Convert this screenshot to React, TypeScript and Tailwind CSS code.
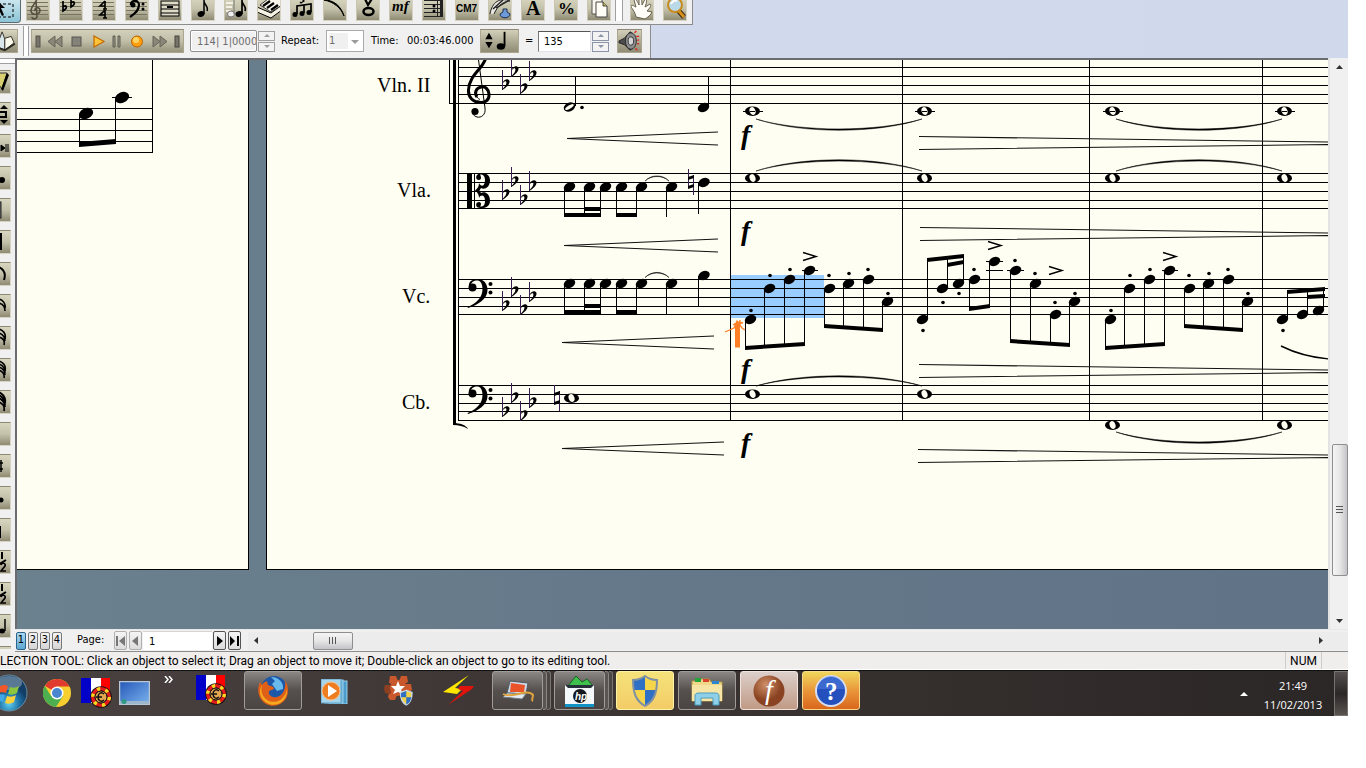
import React from "react";

type Kids = { children?: React.ReactNode };

/* ---------- notation primitives ---------- */

const Lines = ({ ys, x, w }: { ys: number[]; x: number; w: number }) => (
  <g shapeRendering="crispEdges">
    {ys.map((y) => (
      <rect key={y} x={x} y={y} width={w} height={1} />
    ))}
  </g>
);

const Head = ({ x, y, r = 7 }: { x: number; y: number; r?: number }) => (
  <ellipse cx={x} cy={y} rx={r} ry={r * 0.72} transform={`rotate(-24 ${x} ${y})`} />
);

const Stem = ({ x, a, b }: { x: number; a: number; b: number }) => (
  <rect x={x} y={Math.min(a, b)} width={1} height={Math.abs(b - a)} shapeRendering="crispEdges" />
);

const Beam = ({ x1, y1, x2, y2, t = 4 }: { x1: number; y1: number; x2: number; y2: number; t?: number }) => (
  <polygon points={`${x1},${y1} ${x2},${y2} ${x2},${y2 + t} ${x1},${y1 + t}`} />
);

const Whole = ({ x, y, ledger }: { x: number; y: number; ledger?: boolean }) => (
  <g>
    {ledger && <rect x={x - 9} y={y} width={20} height={1} shapeRendering="crispEdges" />}
    <ellipse cx={x + 0.5} cy={y + 0.2} rx={7.5} ry={4.8} />
    <ellipse cx={x + 0.5} cy={y + 0.2} rx={2.9} ry={4} fill="#fefef2" transform={`rotate(-20 ${x} ${y})`} />
    {ledger && <rect x={x - 2} y={y} width={5} height={1} shapeRendering="crispEdges" />}
  </g>
);

const Flat = ({ x, y }: { x: number; y: number }) => (
  <g>
    <rect x={x} y={y - 14} width={1} height={20} fill="#3a2050" />
    <path
      d={`M${x} ${y + 6} C${x + 4} ${y + 4} ${x + 8} ${y} ${x + 7.5} ${y - 3} C${x + 6.5} ${y - 5.5} ${x + 3} ${y - 5.5} ${x + 1} ${y - 2} V${y - 1} C${x + 3} ${y - 3.5} ${x + 4.6} ${y - 3} ${x + 4.4} ${y - 1} C${x + 4} ${y + 2} ${x + 2} ${y + 3} ${x + 1} ${y + 4.5} Z`}
    />
  </g>
);

const Natural = ({ x, y }: { x: number; y: number }) => (
  <g>
    <rect x={x} y={y - 13} width={1} height={19} fill="#3a2050" />
    <rect x={x + 5} y={y - 7} width={1} height={20} fill="#3a2050" />
    <polygon points={`${x},${y - 5} ${x + 6},${y - 7} ${x + 6},${y - 4} ${x},${y - 2}`} />
    <polygon points={`${x},${y + 4} ${x + 6},${y + 2} ${x + 6},${y + 5} ${x},${y + 7}`} />
  </g>
);

const Tie = ({ x1, x2, y, h }: { x1: number; x2: number; y: number; h: number }) => (
  <path
    d={`M${x1} ${y} C${x1 + (x2 - x1) * 0.27} ${y + h * 1.36} ${x2 - (x2 - x1) * 0.27} ${y + h * 1.36} ${x2} ${y} C${x2 - (x2 - x1) * 0.27} ${y + h * 1.2} ${x1 + (x2 - x1) * 0.27} ${y + h * 1.2} ${x1} ${y}Z`}
    stroke="#000"
    strokeWidth={0.5}
  />
);

const Cresc = ({ x1, x2, y }: { x1: number; x2: number; y: number }) => (
  <path d={`M${x2} ${y - 6} L${x1} ${y + 0.5} L${x2} ${y + 7}`} fill="none" stroke="#111" strokeWidth={1.1} />
);

const Dim = ({ x, y }: { x: number; y: number }) => (
  <path
    d={`M${x} ${y} L1328 ${y + 5.5} L1740 ${y + 11} M${x} ${y + 13} L1328 ${y + 8}`}
    fill="none"
    stroke="#111"
    strokeWidth={1.1}
  />
);

const Accent = ({ x, y }: { x: number; y: number }) => (
  <path d={`M${x - 6} ${y - 4} L${x + 7} ${y} L${x - 6} ${y + 4}`} fill="none" stroke="#000" strokeWidth={1.4} />
);

const Forte = ({ y }: { y: number }) => (
  <text x={741} y={y} className="font-['Liberation_Serif',serif] text-[28px] font-bold italic">
    f
  </text>
);

const BassClef = ({ y }: { y: number }) => (
  <g transform={`translate(0 ${y})`}>
    <circle cx={472.5} cy={8.5} r={4} />
    <path d="M469 8 C468 2 473 0 478 0 C484 0 487.500 5 487.500 11 C487.500 20 478 26 468 29 L467.500 28 C477 24 482.500 18 482.500 10 C482.500 4 480 1.500 477 1.500 C473 1.500 470.500 4 470.500 8Z" />
    <circle cx={490.5} cy={5} r={2} />
    <circle cx={490.5} cy={13.5} r={2} />
  </g>
);

const AltoClef = () => (
  <g>
    <rect x={467} y={173} width={5} height={36} />
    <rect x={474} y={173} width={1} height={36} />
    <path d="M475 190.500 C478 188 479 186 479 183 C481 187 485 187 485 180 C485 175 482 174 480 174.500 C481 176 482 180 479 180 C476 180 475.500 177 477 175 C480 172 490 172 490 180 C490 188 484 190 481 188 L479.500 190.500 L481 193 C484 191 490 193 490 201 C490 209 480 209 477 207 C475.500 205 476 202 479 202 C482 202 481 206 480 206.500 C482 207 485 206 485 201 C485 195 481 194 479 198 C479 195 478 193 475 190.500Z" />
  </g>
);

const TrebleClef = () => (
  <g fill="none" stroke="#000">
    <path d="M486 56 C486 67 469 74 468.500 90 C468 98 474 102.500 480 102.500" strokeWidth={3} />
    <path d="M477 102 C485 104 489.500 100 489 94 C488.500 89 485 86 481 87 C476 88 474 93 477 97" strokeWidth={3} />
    <path d="M477 97 C478 98.500 479 99 480 99.500" strokeWidth={1} />
    <path d="M478 56 L485 108 C486 115 481 118 477 117 C474 116 472 114 473 111" strokeWidth={1} />
    <circle cx={475} cy={111.5} r={3.6} fill="#000" stroke="none" />
  </g>
);

const dots = (pts: [number, number][]) =>
  pts.map(([x, y]) => <circle key={`${x}-${y}`} cx={x} cy={y} r={1.8} />);

const heads = (pts: [number, number][], r = 7) =>
  pts.map(([x, y]) => <Head key={`${x}-${y}`} x={x} y={y} r={r} />);

const CelloBar = () => (
  <g>
    {heads([[750.5, 319.5], [769.5, 288.5], [789.5, 279.5], [809.5, 270.5], [829.5, 288.5], [848.5, 283.5], [868.5, 279.5], [887.5, 301.5]], 6)}
    {dots([[751, 310.5], [770, 275.5], [790, 269.5], [829, 275.5], [849, 273.5], [868, 269.5], [888, 293.5]])}
    <Stem x={745} a={320} b={347} />
    <Stem x={764} a={289} b={346} />
    <Stem x={784} a={280} b={345} />
    <Stem x={804} a={271} b={343} />
    <Beam x1={745} y1={346} x2={805} y2={342} />
    <Stem x={824} a={289} b={325} />
    <Stem x={843} a={284} b={327} />
    <Stem x={863} a={280} b={328} />
    <Stem x={882} a={302} b={330} />
    <Beam x1={824} y1={324} x2={883} y2={328} />
    <rect x={802} y={270} width={16} height={1} />
    <Accent x={809} y={256.5} />
  </g>
);

const Rhythm = ({ y, stemEnd, inner }: { y: number; stemEnd: number; inner: number }) => (
  <g>
    {heads([[569.5, y], [589.5, y], [605.5, y], [621.5, y], [641.5, y], [671.5, y]], 6)}
    {[564, 584, 600, 616, 636, 666].map((x) => (
      <Stem key={x} x={x} a={y} b={stemEnd} />
    ))}
    <Beam x1={564} y1={stemEnd - 4} x2={601} y2={stemEnd - 4} />
    <Beam x1={616} y1={stemEnd - 4} x2={637} y2={stemEnd - 4} />
    <Beam x1={584} y1={inner} x2={601} y2={inner} />
    <Tie x1={645} x2={669} y={y - 6} h={-5} />
  </g>
);

function Score() {
  return (
    <svg className="block h-full w-full" role="img" aria-label="String section score">
      <g transform="translate(-267 -60)">
        <rect x={731} y={275} width={93} height={43} fill="#99ccff" />
        <g className="font-['Liberation_Serif',serif] text-[20px]">
          <text x={377} y={92}>Vln. II</text>
          <text x={397} y={197}>Vla.</text>
          <text x={402} y={303}>Vc.</text>
          <text x={402} y={409}>Cb.</text>
        </g>
        <Lines x={458} w={2000} ys={[67, 76, 85, 94, 103, 173, 182, 191, 200, 208, 279, 288, 297, 306, 314, 385, 394, 403, 411, 420]} />
        <g shapeRendering="crispEdges">
          <rect x={453} y={60} width={3} height={364} />
          <rect x={458} y={60} width={1} height={361} />
          <rect x={449} y={60} width={1} height={44} />
          <rect x={449} y={103} width={9} height={1} />
          {[730, 902, 1089, 1262].map((x) => (
            <rect key={x} x={x} y={60} width={1} height={361} />
          ))}
        </g>
        <path d="M453 423 C460 423 466 425 468 429 C463 426 459 425 453 425Z" />

        <TrebleClef />
        <AltoClef />
        <BassClef y={279} />
        <BassClef y={385} />
        {[[502, 84], [511, 71], [520, 88], [529, 75], [502, 194], [511, 181], [520, 199], [529, 185], [502, 305], [511, 291], [520, 309], [529, 296], [502, 411], [511, 397], [520, 415], [529, 402]].map(([x, y]) => (
          <Flat key={`${x}-${y}`} x={x} y={y} />
        ))}

        <Head x={569.5} y={107} r={6} />
        <ellipse cx={569.5} cy={107} rx={4.8} ry={1.6} fill="#fefef2" transform="rotate(-30 569.5 107)" />
        <Stem x={575} a={77} b={106} />
        <circle cx={582} cy={107.5} r={1.8} />
        <Head x={703.5} y={107.5} r={6} />
        <Stem x={708} a={77} b={106} />
        {[752, 924, 1112, 1284].map((x) => (
          <g key={x}>
            <Whole x={x} y={111} ledger />
            <Whole x={x} y={178} />
          </g>
        ))}
        <Whole x={752} y={394} />
        <Whole x={924} y={394} />
        <Whole x={1112} y={425} />
        <Whole x={1284} y={425} />
        <Whole x={571} y={398} />
        <Natural x={554} y={398} />
        <Natural x={688} y={182} />

        <Tie x1={756} x2={922} y={119} h={11} />
        <Tie x1={1116} x2={1282} y={119} h={11} />
        <Tie x1={756} x2={922} y={171} h={-11} />
        <Tie x1={1116} x2={1282} y={171} h={-11} />
        <Tie x1={756} x2={922} y={386} h={-10} />
        <Tie x1={1116} x2={1282} y={432} h={11} />
        <path d="M1281 346 Q1303 357 1330 359" fill="none" stroke="#000" strokeWidth={1.4} />

        <Rhythm y={187} stemEnd={217} inner={207} />
        <Head x={704} y={182.5} r={6} />
        <Stem x={698} a={183} b={214} />
        <Rhythm y={283.5} stemEnd={314} inner={304} />
        <Head x={704} y={275.5} r={6} />
        <Stem x={698} a={276} b={306} />

        <CelloBar />
        <g transform="translate(360 0)">
          <CelloBar />
        </g>

        {heads([[922.5, 319.5], [942.5, 288.5], [958.5, 283.5], [974.5, 279.5], [994.5, 261.5], [1015.5, 270.5], [1035.5, 283.5], [1055.5, 314.5], [1074.5, 301.5], [1282.5, 319.5], [1302.5, 314.5], [1318.5, 310.5]], 6)}
        {dots([[923, 330.5], [943, 302.5], [959, 293.5], [974, 269.5], [1015, 260.5], [1035, 273.5], [1055, 302.5], [1075, 293.5], [1283, 330.5]])}
        <Stem x={927} a={259} b={319} />
        <Stem x={947} a={257} b={288} />
        <Stem x={963} a={255} b={283} />
        <Beam x1={927} y1={258} x2={964} y2={254} />
        <Beam x1={947} y1={263} x2={964} y2={260} />
        <Stem x={969} a={280} b={309} />
        <Stem x={989} a={262} b={307} />
        <Beam x1={969} y1={307} x2={990} y2={304} />
        <Stem x={1010} a={271} b={341} />
        <Stem x={1030} a={284} b={343} />
        <Stem x={1050} a={315} b={344} />
        <Stem x={1069} a={302} b={346} />
        <Beam x1={1010} y1={339} x2={1070} y2={343} />
        <rect x={986} y={261} width={17} height={1} />
        <rect x={986} y={270} width={17} height={1} />
        <rect x={1007} y={270} width={17} height={1} />
        <Accent x={994} y={245.5} />
        <Accent x={1055} y={270.5} />
        <Stem x={1287} a={290} b={319} />
        <Stem x={1307} a={289} b={314} />
        <Stem x={1323} a={288} b={310} />
        <Beam x1={1287} y1={290} x2={1325} y2={287} />
        <Beam x1={1307} y1={295} x2={1325} y2={294} />

        <Cresc x1={567} x2={718} y={138} />
        <Cresc x1={564} x2={718} y={245} />
        <Cresc x1={562} x2={714} y={342} />
        <Cresc x1={562} x2={724} y={448} />
        <Dim x={919} y={136.5} />
        <Dim x={920} y={227.5} />
        <Dim x={919} y={364.5} />
        <Dim x={918} y={449.5} />
        {[144, 240, 378, 452].map((y) => (
          <Forte key={y} y={y} />
        ))}
        <g stroke="#ff7f27" fill="none">
          <path d="M737.500 347.500 V323" strokeWidth={5} />
          <path d="M725 332 L734 328 L737 321 L742 328 L745 330 M733 325 L738 322 L743 323 M740 326 V320" strokeWidth={1.3} />
        </g>
      </g>
    </svg>
  );
}

function FacingPage() {
  return (
    <svg className="block h-full w-full" role="img" aria-label="End of the facing page">
      <g transform="translate(-17 -60)">
        <Lines x={17} w={136} ys={[108, 119, 130, 141, 152]} />
        <rect x={152} y={60} width={1} height={93} />
        {heads([[86, 113.5], [122, 97.5]], 7.4)}
        <rect x={112} y={97} width={20} height={1} />
        <Stem x={79} a={114} b={145} />
        <Stem x={115} a={98} b={142} />
        <Beam x1={79} y1={142} x2={116} y2={139} t={5} />
      </g>
    </svg>
  );
}

/* ---------- tool icons, drawn on a 24 × 24 grid ---------- */

const StaffBg = ({ w = 21 }: { w?: number }) => (
  <g fill="#77735f">
    {[5, 9, 13, 17].map((y) => (
      <rect key={y} x={1} y={y} width={w} height={1} />
    ))}
  </g>
);

const glyph = "font-['Liberation_Serif',serif] font-bold";

const topTools: { name: string; art: React.ReactNode }[] = [
  { name: "Staff tool", art: <><StaffBg /><path d="M11 0 C12 5 5 8 5 14 C6 19 14 18 14 13 C13 9 8 11 9 14 M10 4 L11 20 C10 23 6 22 6 20" fill="none" stroke="#555040" strokeWidth="1.6" /></> },
  { name: "Key signature tool", art: <><StaffBg /><path d="M4 4 V14 C9 11 8 7 4 10 M12 0 V10 C17 7 16 3 12 6" fill="none" stroke="#000" strokeWidth="1.7" /></> },
  { name: "Time signature tool", art: <><StaffBg /><path d="M13 4V12M13 9H8L13 4M13 13V21M13 18H8L13 13M11 12H15M11 21H15" fill="none" stroke="#000" strokeWidth="1.7" /></> },
  { name: "Clef tool", art: <><StaffBg /><circle cx="8" cy="8" r="2.500" /><path d="M6 8 C5 3 14 2 14 8 C14 14 9 17 5 20" fill="none" stroke="#000" strokeWidth="2.200" /><circle cx="18" cy="7" r="1.500" /><circle cx="18" cy="12" r="1.500" /></> },
  { name: "Measure tool", art: <><rect x="3" y="4" width="18" height="15" fill="#dedac5" stroke="#000" /><path d="M3 8H21 M3 12H21 M3 16H21" stroke="#000" /><rect x="9" y="9" width="6" height="2" /></> },
  { name: "Simple entry tool", art: <><ellipse cx="10" cy="17" rx="3.500" ry="2.800" transform="rotate(-20 10 17)" /><path d="M13 17 V0 M13 4 C13 8 18 9 16 14" fill="none" stroke="#000" strokeWidth="1.500" /></> },
  { name: "Speedy entry tool", art: <><path d="M2 6H9 M2 10H8 M2 14H7" stroke="#f4f2e6" strokeWidth="2" /><ellipse cx="7" cy="17" rx="3.500" ry="3" fill="#eee" stroke="#777" /><path d="M10 17V1" stroke="#777" /><ellipse cx="15" cy="17" rx="3.500" ry="2.800" transform="rotate(-20 15 17)" /><path d="M18 17 V0 M18 4 C18 8 23 9 21 14" fill="none" stroke="#000" strokeWidth="1.700" /></> },
  { name: "HyperScribe tool", art: <><path d="M0 10 L14 16 L25 8 V13 L14 21 L0 15Z" fill="#f5f2e4" stroke="#000" /><path d="M3 8 L15 -1 L25 3 V8 L14 15Z" fill="#faf8ee" stroke="#333" /><path d="M6 9L13 4 M10 11L17 6 M14 13L21 8" stroke="#000" strokeWidth="2.200" /></> },
  { name: "Tuplet tool", art: <><path d="M10 0H13L12 2L14 4L11 6L10 5" fill="none" stroke="#000" strokeWidth="1.300" /><path d="M7 17V9L21 7V15 M14 16V8" fill="none" stroke="#000" strokeWidth="1.700" /><circle cx="5" cy="17.500" r="2.500" /><circle cx="12" cy="16.500" r="2.500" /><circle cx="19" cy="15.500" r="2.500" /></> },
  { name: "Smart shape tool", art: <path d="M1 3 C11 3 18 9 21 19 C18 11 11 5 1 3Z" stroke="#000" /> },
  { name: "Articulation tool", art: <><path d="M8 0 L12 8 L17 0" fill="none" stroke="#000" strokeWidth="2.200" /><ellipse cx="12.500" cy="14.500" rx="5" ry="3.500" fill="none" stroke="#000" strokeWidth="2.500" /></> },
  { name: "Expression tool", art: <text x="3" y="14" className={`${glyph} text-[15px] italic`}>mf</text> },
  { name: "Repeat tool", art: <><g fill="#222">{[3, 7, 11, 15, 19].map((y) => <rect key={y} x="2" y={y} width="19" height="1" />)}<rect x="18" y="0" width="3" height="20" /><rect x="15" y="0" width="1" height="20" /></g><circle cx="12" cy="9" r="1.500" /><circle cx="12" cy="14" r="1.500" /></> },
  { name: "Chord tool", art: <text x="1" y="15" className="font-['Liberation_Sans',sans-serif] text-[10px] font-bold">CM7</text> },
  { name: "Lyrics tool", art: <><path d="M2 17 C4 5 12 0 22 4 C16 4 10 8 6 17" fill="#e6e4dc" stroke="#222" /><path d="M5 12 L15 3 M8 11 L20 4" stroke="#222" strokeWidth="1.400" /><path d="M15 12H19V15L22 17C22 22 12 22 12 17L15 15Z" fill="#6d9ad8" stroke="#1d2e4f" /></> },
  { name: "Text tool", art: <text x="5" y="18" className={`${glyph} text-[20px]`}>A</text> },
  { name: "Resize tool", art: <text x="4" y="17" className={`${glyph} text-[17px]`}>%</text> },
  { name: "Page layout tool", art: <><path d="M5 1H15V17H5Z" fill="#faf8ee" stroke="#555" /><path d="M9 5H16L20 9V20H9Z" fill="#fffef6" stroke="#444" /><path d="M16 5V9H20" fill="#c9b94e" stroke="#444" /></> },
];

const handArt = (
  <path d="M6 20 C5 14 1 11 1 9 C2 7 5 10 6 10 L4 3 C5 1 7 3 9 8 L9 1 C11 0 12 2 12 8 L15 2 C17 2 17 5 15 10 L20 7 C22 8 20 11 17 14 L22 15 C21 18 18 20 15 22Z" fill="#fffef8" stroke="#665f4a" />
);
const zoomArt = (
  <>
    <path d="M15 13 L21 20" stroke="#3a2a10" strokeWidth="5" />
    <path d="M15 13 L21 20" stroke="#d8901c" strokeWidth="3" />
    <circle cx="12" cy="8" r="7" fill="#b9d8e8" stroke="#c98a1c" strokeWidth="2" />
    <path d="M8 7 C9 4 12 3 14 4" stroke="#fff" strokeWidth="2" fill="none" />
  </>
);

const tile =
  "block h-6 w-6 shrink-0 overflow-hidden border border-[#d6d3c2] border-t-[#8d8974] border-l-[#c9c5ae] bg-linear-to-b from-[#d8d5c0] via-[#c4c1aa] to-[#8f8b74]";

const Tile = ({ name, children }: Kids & { name: string }) => (
  <button type="button" aria-label={name} className={tile}>
    <svg viewBox="1 1 22 22" className="block h-full w-full overflow-hidden">
      {children}
    </svg>
  </button>
);

const SpinPair = ({ label, color }: { label: string; color: string }) => (
  <span className={`flex w-[17px] flex-col gap-px ${color}`}>
    <button type="button" aria-label={`${label} up`} className="flex h-[10px] items-center justify-center border border-current bg-[#f3f3f3]">
      <svg viewBox="0 0 6 3" className="h-[3px] w-[6px]"><path d="M0 3L3 0L6 3Z" fill="currentColor" /></svg>
    </button>
    <button type="button" aria-label={`${label} down`} className="flex h-[10px] items-center justify-center border border-current bg-[#f3f3f3]">
      <svg viewBox="0 0 6 3" className="h-[3px] w-[6px]"><path d="M0 0H6L3 3Z" fill="currentColor" /></svg>
    </button>
  </span>
);

const transport: { name: string; art: React.ReactNode; w: string }[] = [
  { name: "Start", w: "w-[12px]", art: <rect x="4" y="3" width="4" height="11" fill="#77746a" stroke="#57544b" /> },
  { name: "Rewind", w: "w-[22px]", art: <path d="M11 3V14L4 8.500Z M18 3V14L11 8.500Z" fill="#8b8779" stroke="#67645b" /> },
  { name: "Stop", w: "w-[22px]", art: <rect x="6" y="4" width="9" height="9" fill="#85827a" stroke="#57554e" /> },
  { name: "Play", w: "w-[20px]", art: <path d="M6 3L16 8.500L6 14Z" fill="#ffc33a" stroke="#c06a00" strokeWidth="1.200" /> },
  { name: "Pause", w: "w-[18px]", art: <path d="M5 3H7V14H5Z M10 3H12V14H10Z" fill="#999588" stroke="#5f5c53" /> },
  { name: "Record", w: "w-[22px]", art: <><circle cx="11" cy="8.500" r="5.500" fill="#ff9f0f" stroke="#b76300" /><circle cx="10" cy="7" r="3" fill="#ffd462" /></> },
  { name: "Fast forward", w: "w-[22px]", art: <path d="M5 3V14L12 8.500Z M12 3V14L19 8.500Z" fill="#8b8779" stroke="#67645b" /> },
  { name: "End", w: "w-[13px]", art: <rect x="5" y="3" width="4" height="11" fill="#77746a" stroke="#47443c" /> },
];

const uiFont = "font-['DejaVu_Sans_Condensed','DejaVu_Sans',sans-serif] text-[11px]";

function Toolbars() {
  return (
    <header className={`${uiFont} bg-linear-to-r from-[#d3dbee] to-[#d0d9ec] text-black`}>
      <div className="flex h-[25px] w-[693px] items-start overflow-hidden border-r border-b border-[#8c8c8c] bg-[#f0f0f0]">
        <div className="flex h-[24px] flex-1 items-end gap-[9px] overflow-hidden pb-[3px]">
          <button type="button" aria-label="Selection tool" className="-mr-[4px] -mb-[2px] h-[26px] w-[21px] shrink-0 overflow-hidden rounded-br-sm border border-l-0 border-[#5b6b70] bg-linear-to-b from-[#cfe9f1] to-[#8cc4d6]">
            <svg viewBox="0 0 21 26" className="h-[26px] w-[21px]">
              <rect x="-2" y="6" width="15" height="13" fill="none" stroke="#000" strokeDasharray="3 2" />
              <path d="M-3 2L5 10L1 10L4 17L2 18L-1 12L-3 13Z" />
            </svg>
          </button>
          {topTools.map((t) => (
            <Tile key={t.name} name={t.name}>{t.art}</Tile>
          ))}
          <span className="-mr-[2px] -ml-[5px] flex h-6 w-[8px] shrink-0 justify-between border-r border-l border-[#a0a0a0] bg-white" />
          <Tile name="Hand grabber tool">{handArt}</Tile>
          <Tile name="Zoom tool">{zoomArt}</Tile>
        </div>
      </div>
      <div className="flex h-[33px] w-[651px] items-center border-r border-[#8c8c8c] bg-[#f0f0f0] pb-px">
        <button type="button" aria-label="Score manager" className="h-6 w-[18px] border border-l-0 border-[#aaa68f] bg-linear-to-b from-[#d8d5c0] to-[#8f8b74]">
          <svg viewBox="0 0 18 24" className="block h-full w-full">
            <path d="M-4 18L2 2L5 10V22Z" fill="#d9e6ea" stroke="#2b2920" />
            <path d="M5 9L12 7L15 14L5 22Z" fill="#fbf9ec" stroke="#2b2920" />
            <path d="M-4 19L5 22L16 15" fill="none" stroke="#2b2920" strokeWidth="2" />
          </svg>
        </button>
        <span className="ml-[5px] h-[30px] w-[6px] border-r border-l border-[#a0a0a0] bg-white" />
        <div className="ml-[2px] flex h-6 w-[153px] items-center border border-[#aaa68f] border-t-[#8d8974] bg-linear-to-b from-[#d2cfba] via-[#c2bfa9] to-[#96927b]">
          {transport.map((b) => (
            <button type="button" key={b.name} aria-label={b.name} className={`h-[17px] shrink-0 ${b.w}`}>
              <svg className="block h-full w-full">{b.art}</svg>
            </button>
          ))}
        </div>
        <input aria-label="Measure position" defaultValue="114| 1|0000" disabled className={`${uiFont} ml-[6px] h-[22px] w-[67px] rounded-[2px] border border-[#8e8f8f] bg-[#f0f0f0] pl-[6px] text-[#6d6d6d] inset-ring inset-ring-white`} />
        <span className="ml-px flex"><SpinPair label="Position" color="text-[#a0a0a0]" /></span>
        <label htmlFor="repeat" className="ml-[6px] w-[45px]">Repeat:</label>
        <span className="flex h-[22px] w-[38px] border border-[#aaaaaa] bg-white p-[2px]">
          <select id="repeat" disabled className={`${uiFont} w-full appearance-none bg-[#f0f0f0] text-[#6d6d6d]`}>
            <option>1</option>
          </select>
          <svg viewBox="0 0 13 16" className="h-4 w-[13px] shrink-0"><path d="M3 7H11L7 11Z" fill="#9a9a9a" /></svg>
        </span>
        <span className="ml-[7px] w-[36px]">Time:</span>
        <span className="w-[73px]">00:03:46.000</span>
        <button type="button" aria-label="Tempo unit" className="h-6 w-[39px] border border-[#aaa68f] border-t-[#8d8974] bg-linear-to-b from-[#d2cfba] to-[#8f8b74]">
          <svg viewBox="0 0 39 24" className="block h-full w-full">
            <path d="M8 3L12 10H4Z M4 13H12L8 20Z" />
            <ellipse cx="21" cy="18" rx="4.500" ry="3.500" />
            <rect x="24" y="2" width="2" height="16" />
          </svg>
        </button>
        <label htmlFor="tempo" className="ml-[6px] w-[13px]">=</label>
        <input id="tempo" defaultValue="135" className={`${uiFont} h-[21px] w-[53px] border border-[#e2e3ea] border-t-[#555555] border-l-[#777777] bg-white pl-[5px]`} />
        <span className="ml-px flex"><SpinPair label="Tempo" color="text-[#8c95a8]" /></span>
        <button type="button" aria-label="Playback settings" className="ml-[8px] h-6 w-[25px] border border-[#aaa68f] border-t-[#8d8974] bg-linear-to-b from-[#d2cfba] to-[#8f8b74]">
          <svg viewBox="0 0 25 24" className="block h-full w-full">
            <path d="M1 12L7 9L13 2C19 3 19 20 13 22L7 16L1 14Z" fill="#4c4c4c" stroke="#222" />
            <ellipse cx="14" cy="12" rx="6" ry="9" fill="#8c8c8c" stroke="#2a2a2a" />
            <ellipse cx="14" cy="12" rx="3" ry="4.500" fill="#d5d5d5" stroke="#333" />
            <path d="M18 3L20 1 M20 7H23 M21 11H23 M21 15H23 M19 20L21 22" stroke="#e02020" strokeWidth="1.500" />
          </svg>
        </button>
      </div>
    </header>
  );
}

/* ---------- side palette ---------- */

const half = (
  <>
    <path d="M15 2V9M11 15L19 10" fill="none" stroke="#000" strokeWidth="2" />
    <path d="M14 15C15 12 19 13 18 16L14 21H19" fill="none" stroke="#000" strokeWidth="1.700" />
  </>
);

const sideArt: React.ReactNode[] = [
  <><path d="M12 3H20L15 19L10 12Z" fill="#d8cf70" stroke="#333" /><path d="M20 3L22 5L16 21L14 19Z" /></>,
  <><path d="M17 3L21 7H13Z M17 22L21 18H13Z" /><path d="M13 10H19V15H13" fill="none" stroke="#000" strokeWidth="2" /></>,
  <path d="M14 11L18 14L14 17Z M19 10V18M21 10V18" stroke="#000" />,
  <circle cx="15" cy="14" r="3" />,
  <rect x="11" y="4" width="3" height="16" fill="#666" stroke="#222" />,
  <rect x="12" y="3" width="3" height="17" />,
  <path d="M12 5C18 8 19 12 17 18" fill="none" stroke="#000" strokeWidth="2" />,
  <path d="M12 5C16 6 19 10 18 14M12 9C16 10 18 13 18 17" fill="none" stroke="#000" strokeWidth="1.600" />,
  <path d="M12 3C17 5 19 9 18 13M12 7C17 9 18 12 18 15M12 11C16 12 18 15 17 19" fill="none" stroke="#000" strokeWidth="1.600" />,
  <path d="M12 3C17 5 19 9 18 13M12 6C17 8 18 12 18 15M12 9C17 11 18 14 18 17M12 12C16 14 18 16 17 20" fill="none" stroke="#000" strokeWidth="1.600" />,
  <path d="M12 2C17 5 19 9 18 13M12 5C17 8 18 12 18 15M12 8C17 11 18 14 18 17M12 12C16 14 18 16 17 21" fill="none" stroke="#000" strokeWidth="1.800" />,
  null,
  <path d="M12 9H16M12 15H16M14 6V18" stroke="#000" strokeWidth="1.500" />,
  <circle cx="14" cy="14" r="2.500" />,
  <rect x="12" y="8" width="2" height="12" />,
  half,
  half,
  <><ellipse cx="15" cy="17" rx="3" ry="2.500" /><path d="M18 17V5" stroke="#000" strokeWidth="1.500" /></>,
];

const SidePalette = () => (
  <aside className="flex w-[15px] shrink-0 flex-col overflow-hidden bg-[#f0f0f0]">
    <div className="mb-[6px] h-[6px] shrink-0 border-t border-b border-[#a0a0a0] bg-white" />
    <div className="flex w-[11px] flex-col items-end gap-2">
      {sideArt.map((art, i) => (
        <Tile key={i} name={`Palette item ${i + 1}`}>{art}</Tile>
      ))}
      <span className="h-[3px] w-6 border-t border-[#8d8974] bg-[#d2cfba]" />
    </div>
  </aside>
);

/* ---------- bottom bar ---------- */

const NavButton = ({ name, d, dim }: { name: string; d: string; dim?: boolean }) => (
  <button
    type="button"
    aria-label={name}
    className={`flex h-[19px] w-[13px] items-center justify-center rounded-[2px] border bg-linear-to-b from-[#f4f4f4] to-[#dcdcdc] ${dim ? "border-[#b0b0b0] text-[#777777]" : "border-[#555555] text-black"}`}
  >
    <svg viewBox="0 0 11 12" className="h-3 w-[11px]"><path d={d} fill="currentColor" /></svg>
  </button>
);

const PageBar = () => (
  <div className={`${uiFont} flex h-[22px] items-center border-b border-[#8c8c8c] bg-[#f0f0f0]`}>
    <div className="flex gap-[2px] pl-px">
      {["1", "2", "3", "4"].map((n) => (
        <button
          type="button"
          key={n}
          className={`flex h-[18px] w-[10px] items-center justify-center rounded-[2px] border ${n === "1" ? "border-[#2c628b] bg-linear-to-b from-[#a8d8f0] to-[#5ba7d0]" : "border-[#777777] bg-linear-to-b from-[#f4f4f4] to-[#d5d5d5]"}`}
        >
          {n}
        </button>
      ))}
    </div>
    <label htmlFor="page" className="ml-[15px] w-[37px]">Page:</label>
    <div className="flex gap-[2px]">
      <NavButton dim name="First page" d="M1 1H3V11H1Z M10 1V11L4 6Z" />
      <NavButton dim name="Previous page" d="M8 1V11L2 6Z" />
    </div>
    <input id="page" defaultValue="1" className={`${uiFont} ml-px h-[19px] w-[69px] border-t border-[#d5d5d5] bg-white pl-[6px]`} />
    <div className="ml-px flex gap-[2px]">
      <NavButton name="Next page" d="M3 1V11L9 6Z" />
      <NavButton name="Last page" d="M1 1V11L6 6Z M8 1H10V11H8Z" />
    </div>
    <div className="ml-[7px] flex h-[18px] flex-1 items-center bg-[#ececec]">
      <button type="button" aria-label="Scroll left" className="w-[17px] pl-[6px]">
        <svg viewBox="0 0 4 7" className="h-[7px] w-1"><path d="M4 0V7L0 3.500Z" fill="#333" /></svg>
      </button>
      <button type="button" aria-label="Horizontal position" className="ml-[48px] flex h-[18px] w-[40px] items-center justify-center gap-px rounded-[2px] border border-[#8e8e8e] bg-linear-to-b from-[#f5f5f5] via-[#e6e6e6] to-[#c4c4c8]">
        <i className="h-[7px] w-[2px] border-l border-[#555555]" />
        <i className="h-[7px] w-[2px] border-l border-[#555555]" />
        <i className="h-[7px] w-[2px] border-l border-[#555555]" />
      </button>
      <button type="button" aria-label="Scroll right" className="mr-[25px] ml-auto">
        <svg viewBox="0 0 4 7" className="h-[7px] w-1"><path d="M0 0V7L4 3.500Z" fill="#333" /></svg>
      </button>
    </div>
  </div>
);

const VerticalScroll = () => (
  <div className="flex w-5 shrink-0 flex-col items-center border-l-2 border-[#e3e3e3] bg-[#f0f0f0] pl-px">
    <button type="button" aria-label="Scroll up" className="h-[17px]">
      <svg viewBox="0 0 7 4" className="h-1 w-[7px]"><path d="M0 4H7L3.500 0Z" fill="#333" /></svg>
    </button>
    <div className="flex-[370]" />
    <button type="button" aria-label="Vertical position" className="flex w-[16px] flex-[130] flex-col items-center justify-center gap-px rounded-[2px] border border-[#8e8e8e] bg-linear-to-r from-[#f5f5f5] via-[#e6e6e6] to-[#c4c4c8]">
      <i className="h-[2px] w-[7px] border-t border-[#555555]" />
      <i className="h-[2px] w-[7px] border-t border-[#555555]" />
      <i className="h-[2px] w-[7px] border-t border-[#555555]" />
    </button>
    <div className="flex-[36]" />
    <button type="button" aria-label="Scroll down" className="h-[17px]">
      <svg viewBox="0 0 7 4" className="h-1 w-[7px]"><path d="M0 0H7L3.500 4Z" fill="#333" /></svg>
    </button>
  </div>
);

/* ---------- taskbar ---------- */

const Orb = () => (
  <svg viewBox="9 0 28 38" className="h-[38px] w-7">
    <defs>
      <radialGradient id="orb" cx="50%" cy="80%"><stop offset="0" stopColor="#5fd0f2" /><stop offset="0.6" stopColor="#1d6fa3" /><stop offset="1" stopColor="#123e66" /></radialGradient>
    </defs>
    <circle cx="18" cy="19" r="18" fill="url(#orb)" stroke="#6a8ba0" />
    <ellipse cx="18" cy="9" rx="13" ry="7" fill="#fff" opacity="0.3" />
    <path d="M8 13C12 10 15 11 17 12L15 19C12 18 9 18 6 20Z" fill="#f0582a" />
    <path d="M19 13C22 14 25 14 28 12L26 19C23 21 20 21 17 20Z" fill="#8cc63f" />
    <path d="M6 22C9 20 12 20 14 21L12 28C10 27 7 27 4 29Z" fill="#3fa9e8" />
    <path d="M16 22C19 23 22 23 25 21L23 28C20 30 17 30 14 29Z" fill="#ffd23c" />
  </svg>
);

const Chrome = () => (
  <svg viewBox="0 0 28 28" className="h-7 w-7">
    <circle cx="14" cy="14" r="14" fill="#f7cf2e" />
    <path d="M14 14L2 7A14 14 0 0 1 26.500 7.500H14Z" fill="#df3b2f" />
    <path d="M1.800 7A14 14 0 0 0 13 28L20 17L14 14L8 17Z" fill="#4caf50" />
    <circle cx="14" cy="14" r="6.500" fill="#fff" />
    <circle cx="14" cy="14" r="5" fill="#4a86cf" />
  </svg>
);

const FlagChip = () => (
  <svg viewBox="0 0 31 30" className="h-[30px] w-[31px]">
    <rect width="10" height="25" fill="#0000c8" /><rect x="10" width="10" height="25" fill="#fff" /><rect x="20" width="9" height="25" fill="#f00" />
    <circle cx="20" cy="19" r="10.800" fill="#111" />
    <circle cx="20" cy="19" r="8.200" fill="none" stroke="#e21b1b" strokeWidth="3.600" />
    <circle cx="20" cy="19" r="8.200" fill="none" stroke="#f5d820" strokeWidth="3.600" strokeDasharray="3.200 5.390" />
    <circle cx="20" cy="19" r="6" fill="#e2a650" stroke="#111" />
    <path d="M23 16C20 13 17 16 17 19C17 22 20 25 23 22M15 19H21" fill="none" stroke="#111" strokeWidth="1.500" />
  </svg>
);

const Desktop = () => (
  <svg viewBox="0 0 31 24" className="h-6 w-[31px]">
    <defs><linearGradient id="desk" x1="0" y1="0" x2="1" y2="1"><stop offset="0" stopColor="#2458b8" /><stop offset="1" stopColor="#7db4ee" /></linearGradient></defs>
    <rect x="0.500" y="0.500" width="30" height="23" fill="url(#desk)" stroke="#b9c6d4" strokeWidth="1.500" />
    <rect x="1" y="20" width="29" height="3" fill="#9cb6cc" /><circle cx="5" cy="20.500" r="2.500" fill="#2e9a86" />
  </svg>
);

const Firefox = () => (
  <svg viewBox="0 0 32 32" className="h-8 w-8">
    <circle cx="17" cy="14" r="13" fill="#1d57a8" />
    <path d="M14 2C22 2 27 8 26 14L20 16L15 9L18 6Z" fill="#69b9ec" />
    <path d="M3 7C-1 16 2 25 9 29C18 34 31 28 31 16C31 11 30 8 28 6C29 14 26 20 20 22C15 23 11 20 12 16L17 14C17 11 13 11 11 10L10 6C7 7 5 9 5 10Z" fill="#df5f17" />
    <path d="M5 10C3 17 6 23 12 26C20 29 28 24 30 14C31 27 18 33 10 28C3 24 1 16 5 10Z" fill="#f6a821" />
  </svg>
);

const MediaPlayer = () => (
  <svg viewBox="0 0 27 25" className="h-[25px] w-[27px]">
    <rect x="8" y="2" width="18" height="23" fill="#4c9bc8" stroke="#9bd0ee" /><rect x="4" y="1" width="18" height="23" fill="#6ab6dc" stroke="#9bd0ee" />
    <rect x="0" y="0" width="20" height="24" fill="#a6d5ec" stroke="#5da0c4" /><circle cx="10" cy="12" r="9" fill="#ef7d22" stroke="#fbc08a" /><path d="M7 6L16 12L7 18Z" fill="#fff" />
  </svg>
);

const Shield = ({ className }: { className: string }) => (
  <svg viewBox="0 0 26 32" className={className}>
    <path d="M13 1C9 4 5 5 1 5C1 18 4 26 13 31C22 26 25 18 25 5C21 5 17 4 13 1Z" fill="#f6d54b" />
    <path d="M13 1V15H1C1 12 1 8 1 5C5 5 9 4 13 1Z M13 15H24C23 23 19 28 13 31Z" fill="#2f6fc4" />
    <path d="M13 1C9 4 5 5 1 5C1 18 4 26 13 31C22 26 25 18 25 5C21 5 17 4 13 1Z" fill="none" stroke="#7d90a4" strokeWidth="2" />
  </svg>
);

const Flower = () => (
  <svg viewBox="0 0 30 30" className="h-[30px] w-[30px]">
    <g fill="#c9582c"><path d="M6 0H12L14 5L10 9L5 7Z M17 0H23L24 6L19 9L15 5Z M21 8H27L28 14L24 17L20 13Z M5 17L10 15L13 19L11 24H6L4 21Z" /><path d="M1 9H7L9 13L6 18L1 17L0 12Z" fill="#8d3f22" /><circle cx="14" cy="12" r="8" /></g>
    <path d="M14 5L16 10L21 10L17 14L19 18L14 16L9 18L11 14L7 10L12 10Z" fill="#fff" />
    <g transform="translate(16 14) scale(0.480)"><path d="M13 1L25 5C25 18 22 26 13 31C4 26 1 18 1 5Z" fill="#f2d247" stroke="#c7d7e6" strokeWidth="3" /><path d="M13 2V15H2V6Z M13 15H24C22 23 19 28 13 30Z" fill="#2f6fc4" /></g>
  </svg>
);

const Bolt = () => (
  <svg viewBox="0 0 32 30" className="h-[30px] w-8">
    <path d="M26 0L0 17L14 19L19 14L12 13Z" fill="#ffe600" /><path d="M31 11L17 11L15 14L20 16L5 30L29 14Z" fill="#e0140c" />
  </svg>
);

const Laptop = () => (
  <svg viewBox="0 0 32 22" className="h-[22px] w-8">
    <path d="M8 1L26 3L24 14L5 13Z" fill="#cfd9e4" stroke="#4b5763" /><path d="M9 3L23 5L22 12L8 12Z" fill="#e9532a" />
    <path d="M5 13L24 14L20 19L1 17Z" fill="#e5eaf0" stroke="#6f7c88" /><path d="M1 14C10 19 25 8 31 15C31 18 29 20 31 21" fill="none" stroke="#e0a43c" strokeWidth="2" />
  </svg>
);

const HpBox = () => (
  <svg viewBox="0 0 30 32" className="h-8 w-[30px]">
    <path d="M3 11L11 1L17 7L22 4L28 11Z" fill="#3fbf4c" stroke="#126421" /><path d="M0 10H29V32H0Z" fill="#f4f8fb" /><path d="M0 29H29V32H0Z" fill="#1193c8" /><path d="M0 10H29L26 13H3Z" fill="#27303a" />
    <circle cx="15" cy="21" r="7" fill="#15181c" /><text x="10" y="25" fill="#fff" className="font-['Liberation_Sans',sans-serif] text-[10px] font-bold italic">hp</text>
  </svg>
);

const Explorer = () => (
  <svg viewBox="0 0 32 32" className="h-8 w-8">
    <path d="M1 6H8L10 4H18L20 7H31V26H1Z" fill="#f0d888" stroke="#b59a4a" /><rect x="4" y="3" width="6" height="4" fill="#23a53a" /><rect x="12" y="4" width="6" height="3" fill="#d9452c" /><rect x="21" y="6" width="7" height="3" fill="#2b86cf" />
    <path d="M1 10H31V26H1Z" fill="#f7e5a5" /><path d="M4 30V21C4 19 5 18 8 18H24C27 18 28 19 28 21V30H22V23H10V30Z" fill="#8fcfe8" stroke="#4a9dc0" />
  </svg>
);

const Finale = () => (
  <svg viewBox="0 0 32 32" className="h-8 w-8">
    <defs><radialGradient id="fin" cx="40%" cy="30%"><stop offset="0" stopColor="#cf9068" /><stop offset="1" stopColor="#8a4322" /></radialGradient></defs>
    <circle cx="16" cy="16" r="15.500" fill="url(#fin)" /><text x="12" y="24" fill="#fff" className="font-['Liberation_Serif',serif] text-[28px] italic">f</text>
  </svg>
);

const Help = () => (
  <svg viewBox="0 0 32 32" className="h-8 w-8">
    <circle cx="16" cy="16" r="15" fill="#2450bd" stroke="#d6def0" strokeWidth="2" /><path d="M3 14A13 13 0 0 1 29 14Z" fill="#4d7ada" opacity="0.6" />
    <text x="10" y="25" fill="#fff" className="font-['Liberation_Serif',serif] text-[25px] font-bold">?</text>
  </svg>
);

const task = "flex h-[39px] shrink-0 items-center justify-center rounded-[3px] border";
const glass = "border-[#a09c9a] bg-linear-to-b from-[#8b8785] via-[#55504e] to-[#4a4543]";

const Stack = ({ name, children }: Kids & { name: string }) => (
  <div className="flex">
    <button type="button" aria-label={name} className={`${task} ${glass} w-[51px]`}>{children}</button>
    <i className="h-[39px] w-[4px] rounded-r-[3px] border border-l-0 border-[#8a8684] bg-[#5a5553]" />
    <i className="h-[39px] w-[4px] rounded-r-[3px] border border-l-0 border-[#787472] bg-[#4b4644]" />
  </div>
);

const Taskbar = () => (
  <footer className="flex h-[46px] items-start overflow-hidden border-t border-[#111111] bg-linear-to-r from-[#4a4240] via-[#3a3331] to-[#2b2726] text-white">
    <button type="button" aria-label="Start" className="mt-[3px]"><Orb /></button>
    <a href="#chrome" aria-label="Chrome" className="mt-[8px] ml-[15px]"><Chrome /></a>
    <a href="#casino" aria-label="Casino" className="mt-[7px] ml-[10px]"><FlagChip /></a>
    <a href="#desktop" aria-label="Desktop" className="mt-[10px] ml-[7px]"><Desktop /></a>
    <button type="button" aria-label="More shortcuts" className="mt-[5px] ml-[14px]">
      <svg viewBox="0 0 9 7" className="h-[7px] w-[9px]"><path d="M1 0L4 3.500L1 7M5 0L8 3.500L5 7" fill="none" stroke="#fff" strokeWidth="1.500" /></svg>
    </button>
    <a href="#casino-app" aria-label="Casino app" className="mt-[4px] ml-[23px]"><FlagChip /></a>
    <button type="button" aria-label="Firefox" className={`${task} ${glass} ml-[17px] w-[58px]`}><Firefox /></button>
    <a href="#media" aria-label="Media player" className="mt-[8px] ml-[19px]"><MediaPlayer /></a>
    <a href="#updater" aria-label="Updater" className="mt-[5px] ml-[36px]"><Flower /></a>
    <a href="#player" aria-label="Player" className="mt-[4px] ml-[29px]"><Bolt /></a>
    <div className="ml-[17px] flex gap-[3px]">
      <Stack name="Photos"><Laptop /></Stack>
      <Stack name="HP software"><HpBox /></Stack>
    </div>
    <div className="ml-[3px] flex gap-[4px]">
      <button type="button" aria-label="Security" className={`${task} w-[58px] border-[#fff3a8] bg-linear-to-b from-[#f5e27a] to-[#f3cc66]`}><Shield className="h-8 w-[26px]" /></button>
      <button type="button" aria-label="File explorer" className={`${task} ${glass} w-[58px]`}><Explorer /></button>
      <button type="button" aria-label="Finale" className={`${task} w-[58px] border-[#f1e3dc] bg-linear-to-b from-[#dccfca] to-[#c09a86]`}><Finale /></button>
      <button type="button" aria-label="Help" className={`${task} w-[58px] border-[#f7d98a] bg-linear-to-b from-[#efd65c] via-[#e9963a] to-[#d9671c]`}><Help /></button>
    </div>
    <button type="button" aria-label="Show hidden icons" className="mt-[21px] ml-auto">
      <svg viewBox="0 0 8 4" className="block h-1 w-2"><path d="M0 4H8L4 0Z" fill="#fff" /></svg>
    </button>
    <div className="mt-[5px] ml-[14px] w-[62px] text-center font-['Open_Sans','Noto_Sans',sans-serif] text-[11px] leading-[19px]">
      <div>21:49</div>
      <div>11/02/2013</div>
    </div>
    <button type="button" aria-label="Show desktop" className="ml-[10px] h-[45px] w-[14px] border border-[#77716f] bg-linear-to-b from-[#55504e] via-[#2c2827] to-[#5a5350]" />
  </footer>
);

export default function App() {
  return (
    <div className="min-h-screen bg-white pr-[18px] text-black">
      <Toolbars />
      <div className="flex">
        <SidePalette />
        <main className="min-w-0 flex-1">
          <div className="flex h-[572px] border-b border-[#e8e8e8]">
            <div className="flex min-w-0 flex-1 gap-[17px] overflow-hidden border-t-2 border-l-2 border-[#6a6c70] bg-linear-to-r from-[#6b818e] via-[#65788a] to-[#617386]">
              <section className="h-[510px] w-[232px] shrink-0 border-r border-b border-black bg-[#fefef2]"><FacingPage /></section>
              <section className="h-[510px] min-w-0 flex-1 border-b border-l border-black bg-[#fefef2]"><Score /></section>
            </div>
            <VerticalScroll />
          </div>
          <PageBar />
        </main>
      </div>
      <div className="flex h-[18px] items-center overflow-hidden border-b border-white bg-[#f0eded] font-['Roboto','Open_Sans',sans-serif] text-[12px] whitespace-nowrap">
        <p className="min-w-0 flex-1 overflow-hidden">
          LECTION TOOL: Click an object to select it; Drag an object to move it; Double-click an object to go to its editing tool.
        </p>
        <span className="w-[37px] border-r border-l border-[#cfcccc] text-center">NUM</span>
        <span className="w-[26px]" />
      </div>
      <Taskbar />
    </div>
  );
}
